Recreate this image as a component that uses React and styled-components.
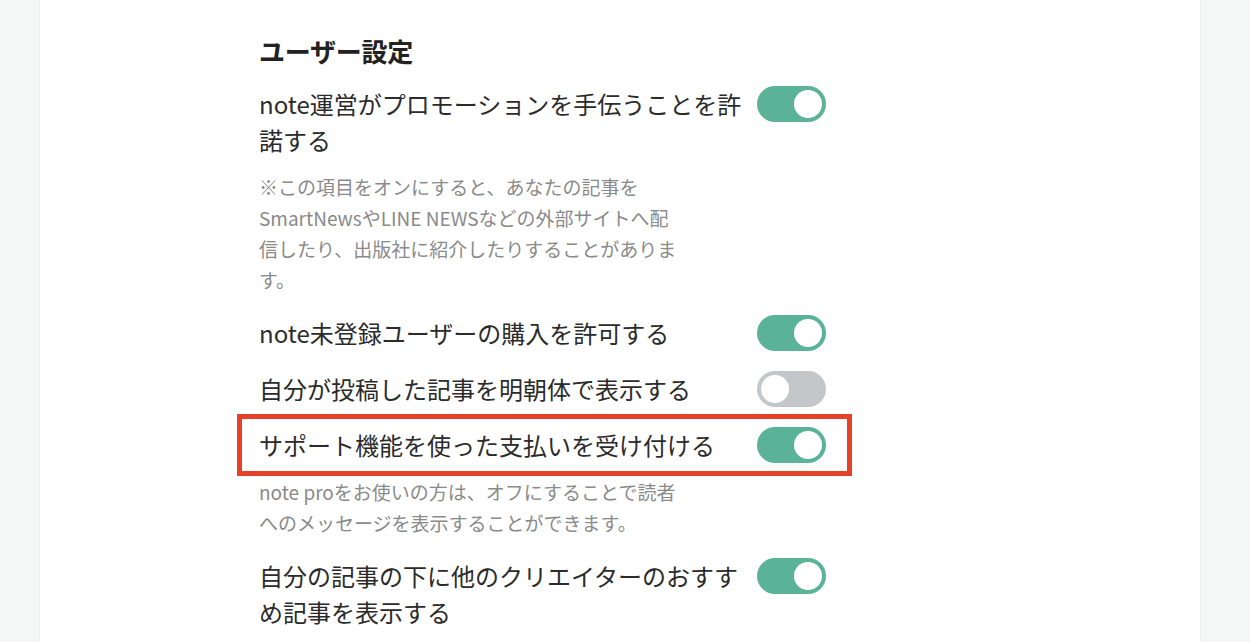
import styled, { createGlobalStyle } from "styled-components";

const GlobalStyle = createGlobalStyle`
  html, body {
    margin: 0;
    padding: 0;
    background-color: #f5f7f7;
  }
  body {
    font-family: "Noto Sans CJK JP", "Noto Sans", sans-serif;
    color: #2b2b2b;
  }
`;

const Page = styled.div`
  min-height: 642px;
  display: flex;
`;

const Panel = styled.main`
  box-sizing: border-box;
  margin-left: 39px;
  width: 1162px;
  min-height: 642px;
  background-color: #fff;
  border-left: 1px solid #eceeee;
  border-right: 1px solid #eceeee;
  padding: 33px 0 0 219px;
`;

const Section = styled.section`
  width: 567px;
  display: flex;
  flex-direction: column;
`;

const Heading = styled.h2`
  margin: 0 0 17px;
  font-size: 26px;
  line-height: 36px;
  font-weight: 700;
  color: #222;
  letter-spacing: -0.01em;
`;

const Row = styled.div`
  position: relative;
  display: flex;
  justify-content: space-between;
  align-items: flex-start;
  gap: 14px;
  margin-top: ${(p) => (p.$first ? "0" : "20px")};

  ${(p) =>
    p.$marked &&
    `
    &::after {
      content: "";
      position: absolute;
      top: -13px;
      bottom: -13px;
      left: -22px;
      right: -26px;
      border: 5px solid #e8412b;
      pointer-events: none;
    }
  `}
`;

const Label = styled.div`
  flex: 1;
  font-size: 24px;
  line-height: 36px;
  color: #2b2b2b;
`;

const Note = styled.p`
  margin: 13px 0 0;
  width: 420px;
  font-size: 19px;
  line-height: 31px;
  color: #8a8a8a;
`;

const Switch = styled.button`
  flex: 0 0 auto;
  position: relative;
  width: 69px;
  height: 36px;
  border: none;
  border-radius: 18px;
  padding: 0;
  cursor: pointer;
  background-color: ${(p) => (p.$on ? "#5bb397" : "#c3c7ca")};

  &::before {
    content: "";
    position: absolute;
    top: 4px;
    left: ${(p) => (p.$on ? "37px" : "4px")};
    width: 28px;
    height: 28px;
    border-radius: 50%;
    background-color: #fff;
  }
`;

const settings = [
  {
    label: "note運営がプロモーションを手伝うことを許諾する",
    on: true,
    note: "※この項目をオンにすると、あなたの記事をSmartNewsやLINE NEWSなどの外部サイトへ配信したり、出版社に紹介したりすることがあります。",
  },
  { label: "note未登録ユーザーの購入を許可する", on: true },
  { label: "自分が投稿した記事を明朝体で表示する", on: false },
  {
    label: "サポート機能を使った支払いを受け付ける",
    on: true,
    marked: true,
    note: "note proをお使いの方は、オフにすることで読者へのメッセージを表示することができます。",
  },
  { label: "自分の記事の下に他のクリエイターのおすすめ記事を表示する", on: true },
];

export default function App() {
  return (
    <Page>
      <GlobalStyle />
      <Panel>
        <Section>
          <Heading>ユーザー設定</Heading>
          {settings.map((s, i) => (
            <div key={i}>
              <Row $first={i === 0} $marked={s.marked}>
                <Label>{s.label}</Label>
                <Switch $on={s.on} aria-pressed={s.on} />
              </Row>
              {s.note && <Note>{s.note}</Note>}
            </div>
          ))}
        </Section>
      </Panel>
    </Page>
  );
}
